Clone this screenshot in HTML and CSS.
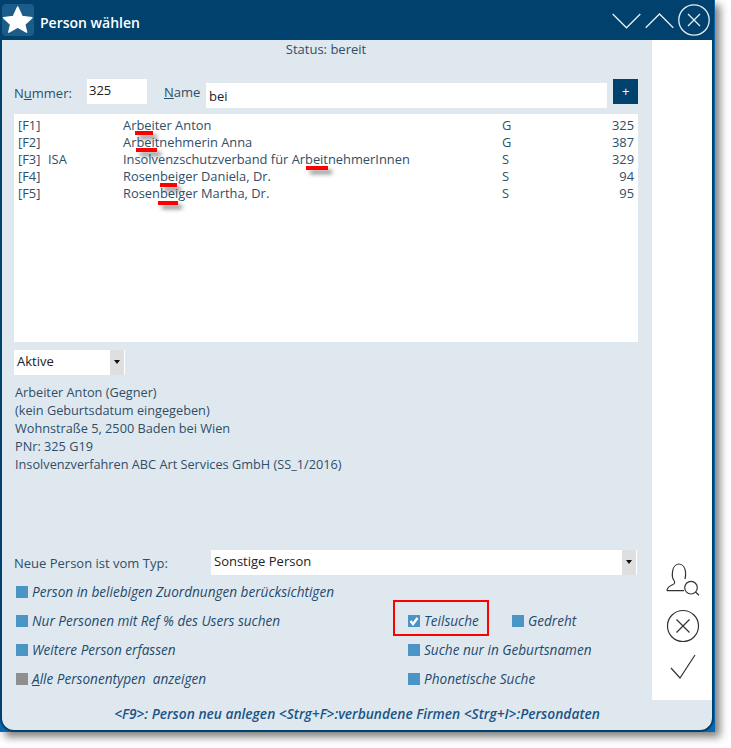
FILE: index.html
```html
<!DOCTYPE html>
<html lang="de">
<head>
<meta charset="utf-8">
<title>Person wählen</title>
<link rel="stylesheet" href="styles.css">
</head>
<body>
<div class="window">
  <div class="frame">
    <header class="titlebar">
      <div class="appicon">
        <svg width="32" height="32" viewBox="0 0 32 32"><path class="star" d="M15.700 3l4.400 9.500 9.800 1.300-7.200 6.700 1.900 7.700-8.900-5-8.900 5 1.900-7.700-7.200-6.700 9.800-1.300z"/></svg>
      </div>
      <h1 class="wintitle">Person wählen</h1>
      <div class="winbtns">
        <svg class="wb" width="29" height="20" viewBox="0 0 29 20"><path d="M.700 4l13.800 13.800 13.800-13.800"/></svg>
        <svg class="wb" width="29" height="20" viewBox="0 0 29 20"><path d="M.700 17.800l13.800-13.800 13.800 13.800"/></svg>
        <svg class="wb" width="32" height="32" viewBox="0 0 32 32"><circle cx="16" cy="16" r="15.200"/><path d="M10 10l12 12M22 10l-12 12"/></svg>
      </div>
    </header>
    <div class="body">
      <main class="main">
        <div class="status">Status: bereit</div>
        <div class="searchrow">
          <label class="lbl-num">N<u>u</u>mmer:</label>
          <div class="numbox">325</div>
          <label class="lbl-name"><u>N</u>ame</label>
          <div class="namebox">bei</div>
          <div class="plusbtn">+</div>
        </div>
        <div class="results">
          <div class="row"><span class="c-key">[F1]</span><span class="c-tag"></span><span class="c-name">Arbeiter Anton</span><span class="c-type">G</span><span class="c-num">325</span></div>
          <div class="row"><span class="c-key">[F2]</span><span class="c-tag"></span><span class="c-name">Arbeitnehmerin Anna</span><span class="c-type">G</span><span class="c-num">387</span></div>
          <div class="row"><span class="c-key">[F3]</span><span class="c-tag">ISA</span><span class="c-name">Insolvenzschutzverband für ArbeitnehmerInnen</span><span class="c-type">S</span><span class="c-num">329</span></div>
          <div class="row"><span class="c-key">[F4]</span><span class="c-tag"></span><span class="c-name">Rosenbeiger Daniela, Dr.</span><span class="c-type">S</span><span class="c-num">94</span></div>
          <div class="row"><span class="c-key">[F5]</span><span class="c-tag"></span><span class="c-name">Rosenbeiger Martha, Dr.</span><span class="c-type">S</span><span class="c-num">95</span></div>
          <i class="mark m1"></i><i class="mark m2"></i><i class="mark m3"></i><i class="mark m4"></i><i class="mark m5"></i>
        </div>
        <div class="select select-small"><span class="select-text">Aktive</span><span class="arrow"></span></div>
        <div class="details">
          <div>Arbeiter Anton (Gegner)</div>
          <div>(kein Geburtsdatum eingegeben)</div>
          <div>Wohnstraße 5, 2500 Baden bei Wien</div>
          <div>PNr: 325 G19</div>
          <div>Insolvenzverfahren ABC Art Services GmbH (SS_1/2016)</div>
        </div>
        <div class="typerow">
          <span class="typelbl">Neue Person ist vom Typ:</span>
          <div class="select select-wide"><span class="select-text">Sonstige Person</span><span class="arrow"></span></div>
        </div>
        <div class="options">
          <div class="optrow"><div class="opt"><i class="cb"></i>Person in beliebigen Zuordnungen berücksichtigen</div></div>
          <div class="optrow">
            <div class="opt"><i class="cb"></i>Nur Personen mit Ref % des Users suchen</div>
            <div class="col2 col2-box">
              <div class="redbox"><div class="opt"><i class="cb cb-on"><svg width="12" height="12" viewBox="0 0 12 12"><path d="M2.500 6l2.500 3 4.500-6"/></svg></i>Teilsuche</div></div>
              <div class="opt opt-gedreht"><i class="cb"></i>Gedreht</div>
            </div>
          </div>
          <div class="optrow">
            <div class="opt"><i class="cb"></i>Weitere Person erfassen</div>
            <div class="col2"><div class="opt"><i class="cb"></i>Suche nur in Geburtsnamen</div></div>
          </div>
          <div class="optrow">
            <div class="opt"><i class="cb cb-grey"></i><span><u>A</u>lle Personentypen&nbsp; anzeigen</span></div>
            <div class="col2"><div class="opt"><i class="cb"></i>Phonetische Suche</div></div>
          </div>
        </div>
      </main>
      <aside class="side">
        <svg class="sideicon" width="34" height="34" viewBox="0 0 34 34"><path d="M1 27.700h17M1 27.700c0-3 3-5 6-6.200 2-.8 2-2.500 1-4-1.500-2-2-5-1.500-8.500.5-4.500 3-8 6.500-8s6 3.500 6.500 8c.3 2.500 0 5-.5 7"/><circle cx="25" cy="24.700" r="6.300"/><path d="M29.500 29l3.500 3.300"/></svg>
        <svg class="sideicon sideicon-close" width="34" height="34" viewBox="0 0 34 34"><circle cx="17" cy="17" r="15.500"/><path d="M10.500 10.500l13 13M23.500 10.500l-13 13"/></svg>
        <svg class="sideicon" width="28" height="26" viewBox="0 0 28 26"><path d="M2 14l9 10 15-23"/></svg>
      </aside>
    </div>
    <footer class="footer">&lt;F9&gt;: Person neu anlegen &lt;Strg+F&gt;:verbundene Firmen &lt;Strg+I&gt;:Persondaten</footer>
  </div>
</div>
</body>
</html>
```
FILE: styles.css
```css
* { box-sizing: border-box; }
html, body { margin: 0; padding: 0; background: #fff; }
body { width: 731px; height: 748px; overflow: hidden; font-family: "Open Sans", sans-serif; font-size: 13px; color: #2f4e68; }

.window { width: 715px; height: 732px; background: #0b66b0; box-shadow: 5px 5px 8px rgba(60,60,60,.65); }
.frame { width: 714px; height: 732px; display: flex; flex-direction: column; background: #e0e8ef; border: solid #00416d; border-width: 0 2px 2px 2px; border-radius: 0 0 14px 14px; overflow: hidden; }

.titlebar { height: 40px; flex: none; background: #00416d; display: flex; align-items: center; margin: 0 -2px; padding: 0 3px 0 2px; }
.appicon { width: 32px; height: 32px; background: #1c5c88; border-radius: 4px; }
.star { fill: #fff; stroke: #fff; stroke-width: 1.500; stroke-linejoin: round; }
.wintitle { margin: 4px 0 0 6px; font-size: 14px; font-weight: 600; color: #fff; flex: 1; }
.winbtns { display: flex; align-items: center; gap: 4px; margin-right: 1px; }
.wb { fill: none; stroke: #e8eef3; stroke-width: 1.300; }

.body { flex: 1; display: flex; min-height: 0; }
.main { width: 650px; flex: none; padding: 0 14px 0 12px; }
.side { width: 60px; flex: none; background: #fff; display: flex; flex-direction: column; align-items: center; padding: 523px 0 0 2px; gap: 11px; }
.sideicon { fill: none; stroke: #333; stroke-width: 1.200; flex: none; }
.sideicon-close { margin-top: 1px; }

.status { text-align: center; line-height: 18px; height: 39px; }
.searchrow { display: flex; align-items: flex-start; height: 35px; }
.lbl-num { width: 73px; padding-top: 5px; line-height: 18px; }
.numbox { width: 60px; height: 25px; background: #fff; color: #222; padding-left: 2px; line-height: 22px; }
.lbl-name { margin-left: 17px; width: 42px; padding-top: 4px; line-height: 18px; }
.namebox { margin-top: 4px; width: 401px; height: 25px; background: #fff; color: #222; padding-left: 3px; line-height: 26px; }
.plusbtn { margin-left: 6px; width: 25px; height: 25px; background: #00416d; color: #fff; text-align: center; font-size: 13px; line-height: 25px; font-style: italic; }

.results { position: relative; height: 228px; background: #fff; padding: 3px 4px 0 4px; font-size: 12.870px; }
.row { display: flex; height: 17px; line-height: 17px; }
.c-key { width: 30px; }
.c-tag { width: 75px; }
.c-name { width: 379px; }
.c-type { width: 40px; }
.c-num { width: 90px; flex: 1; text-align: right; }
.mark { position: absolute; height: 4px; background: #f00; box-shadow: 4px 4px 4px rgba(60,60,60,.6); }
.m1 { left: 121px; top: 17px; width: 18px; }
.m2 { left: 122px; top: 34px; width: 21px; }
.m3 { left: 292px; top: 52px; width: 22px; }
.m4 { left: 146px; top: 69px; width: 17px; }
.m5 { left: 144px; top: 87px; width: 20px; }

.select { background: #fff; display: flex; justify-content: space-between; color: #222; height: 25px; line-height: 23px; border-right: 1px solid #fff; }
.select-small { width: 111px; margin-top: 8px; }
.select-wide { width: 426px; }
.select-text { padding-left: 3px; }
.arrow { width: 14px; height: 25px; background: #dfdfdf; position: relative; flex: none; }
.arrow::after { content: ""; position: absolute; left: 4px; top: 10px; border: solid transparent; border-width: 4px 3.500px 0; border-top-color: #111; }

.details { margin-top: 8px; padding-left: 1px; height: 167px; font-size: 12.730px; }
.details div { line-height: 18px; }

.typerow { display: flex; height: 25px; align-items: flex-start; }
.typelbl { width: 197px; line-height: 25px; padding-top: 1px; }
.options { padding-left: 2px; padding-top: 2px; }
.optrow { display: flex; height: 29px; align-items: center; }
.opt { display: flex; align-items: center; font-style: italic; font-size: 13.580px; color: #1f4a6e; white-space: nowrap; }
.optrow > .opt:first-child { width: 392px; }
.cb { width: 12px; height: 12px; background: #4a94c6; margin-right: 4px; flex: none; display: block; }
.cb-grey { background: #8f8f8f; }
.cb-on svg { display: block; fill: none; stroke: #fff; stroke-width: 2.400; }
.col2 { display: flex; align-items: center; }
.col2-box { margin-left: -15px; }
.redbox { width: 96px; height: 36px; margin-bottom: 6px; border: 2px solid #f00; display: flex; align-items: center; padding: 6px 0 0 13px; }
.opt-gedreht { margin-left: 23px; }

.footer { height: 30px; flex: none; line-height: 28px; text-align: center; font-weight: 600; font-style: italic; color: #1a5588; font-size: 13.760px; }
```
